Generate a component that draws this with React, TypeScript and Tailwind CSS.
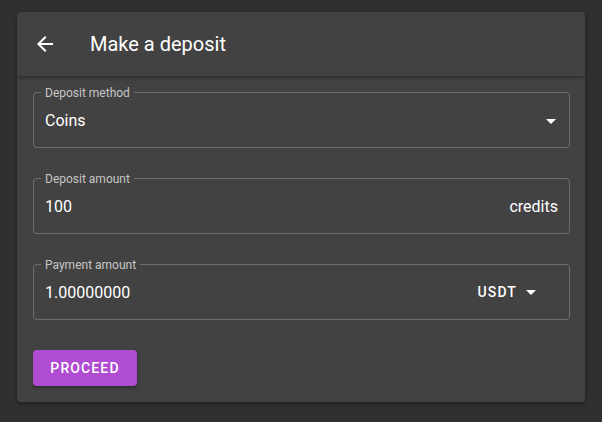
import React from "react";

function Caret({ className = "" }: { className?: string }) {
  return (
    <svg viewBox="0 0 24 24" width="24" height="24" className={className} fill="currentColor">
      <path d="M7 10l5 5 5-5z" />
    </svg>
  );
}

function Field({ label, children }: { label: string; children: React.ReactNode }) {
  return (
    <div className="relative h-[56px] rounded-[4px] border border-[#6e6e6e] flex items-center pl-[11px] pr-[11px]">
      <span className="absolute -top-[7px] left-[7px] px-[4px] bg-[#424242] text-[12px] leading-[14px] text-[#c6c6c6]">
        {label}
      </span>
      {children}
    </div>
  );
}

export default function App() {
  return (
    <div
      className="w-[602px] h-[422px] bg-[#303030] pt-[12px] pl-[17px]"
      style={{ fontFamily: "Roboto, 'Liberation Sans', sans-serif" }}
    >
      <div className="w-[568px] h-[390px] bg-[#424242] rounded-[4px] shadow-[0_2px_4px_rgba(0,0,0,0.35)] overflow-hidden">
        <div className="relative z-10 h-[64px] flex items-center bg-[#424242] shadow-[0_2px_4px_rgba(0,0,0,0.3)] pl-[16px]">
          <svg viewBox="0 0 24 24" width="24" height="24" fill="#ffffff">
            <path d="M20 11H7.83l5.59-5.59L12 4l-8 8 8 8 1.41-1.41L7.83 13H20v-2z" />
          </svg>
          <span className="ml-[33px] text-[20px] text-white">Make a deposit</span>
        </div>
        <div className="flex flex-col gap-[30px] pl-[16px] pr-[15px] pt-[16px]">
          <Field label="Deposit method">
            <span className="text-[16px] leading-[20px] pt-[2px] text-white flex-1">Coins</span>
            <Caret className="text-white -mr-[5px] mt-[1px]" />
          </Field>
          <Field label="Deposit amount">
            <span className="text-[16px] leading-[20px] pt-[2px] text-white flex-1">100</span>
            <span className="text-[16px] leading-[20px] pt-[2px] text-white">credits</span>
          </Field>
          <Field label="Payment amount">
            <span className="text-[16px] leading-[20px] pt-[2px] text-white flex-1">1.00000000</span>
            <span className="flex items-center mr-[22px] text-[14px] font-medium text-white tracking-[0.08em]">
              USDT
              <Caret className="text-white ml-[2px] -mr-[7px]" />
            </span>
          </Field>
          <div>
            <button className="w-[104px] h-[36px] rounded-[4px] bg-[#b04cd2] text-white text-[14px] font-medium tracking-[0.08em] shadow-[0_2px_3px_rgba(0,0,0,0.3)]">
              PROCEED
            </button>
          </div>
        </div>
      </div>
    </div>
  );
}
